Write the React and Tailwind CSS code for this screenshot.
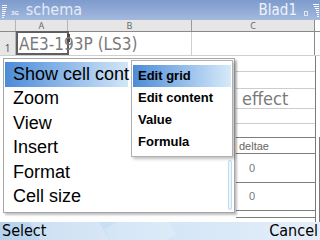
const narrow = "font-['Liberation_Sans_Narrow','DejaVu_Sans_Condensed','Liberation_Sans',sans-serif]"

function Bars({ className }) {
  return (
    <div className={`flex flex-col items-end gap-[1px] ${className}`}>
      {[6, 5, 4, 3, 3, 2, 2].map((w, i) => (
        <div key={i} className="h-[1px] bg-white" style={{ width: w }} />
      ))}
    </div>
  )
}

function StatusBar() {
  return (
    <div className="relative flex h-[20px] items-center bg-gradient-to-b from-[#7e9bcd] to-[#a3b9de]">
      <div className="ml-[2px] flex flex-col items-start gap-[1px] pt-[2px]">
        {[5, 5, 4, 4, 3, 3, 2].map((w, i) => (
          <div key={i} className="h-[1px] bg-white/90" style={{ width: w }} />
        ))}
      </div>
      <span className="ml-[4px] mt-[5px] text-[6px] font-bold leading-none text-white/80">3G</span>
      <span className={`ml-[7px] text-[16px] leading-none text-[#e4ecf8] ${narrow}`}>schema</span>
      <span className={`ml-auto text-[15px] leading-none text-[#eef3fb] ${narrow}`}>Blad1</span>
      <div className="ml-[7px] mt-[6px] h-[5px] w-[4px] border border-white/70" />
      <Bars className="ml-[5px] mr-[1px] pt-[1px]" />
    </div>
  )
}

function Sheet() {
  const lower = [
    { h: 16 },
    { h: 17 },
    { h: 20, text: "effect", big: true },
    { h: 15 },
    { h: 14, dark: true },
    { h: 16, text: "deltae", dark: true },
    { h: 29, text: "0", dark: true },
    { h: 28, text: "0", dark: true },
    { h: 7, dark: true },
  ]
  return (
    <div className="relative flex-1 overflow-hidden bg-white">
      {/* column header */}
      <div className="flex h-[12px] border-b border-[#8a8a8a] bg-[#e6e6e6] text-[9px] leading-[11px] text-[#6a6a6a]">
        <div className="w-[16px] border-r border-[#b5b5b5]" />
        <div className="w-[52px] border-r border-[#b5b5b5] text-center">A</div>
        <div className="w-[124px] border-r border-[#9a9a9a] text-center">B</div>
        <div className="w-[123px] border-r border-[#8a8a8a] text-center">C</div>
        <div className="flex-1 bg-white" />
      </div>
      {/* row 1 */}
      <div className="relative flex h-[24px] border-b border-[#cfcfcf]">
        <div className="flex w-[16px] items-end justify-center border-r border-[#b5b5b5] bg-[#e6e6e6] pb-[2px] text-[10px] leading-none text-[#555]">1</div>
        <div className="w-[52px] border-r border-[#cfcfcf]" />
        <div className="w-[124px] border-r border-[#cfcfcf]" />
        <div className="w-[123px] border-r border-[#8a8a8a]" />
        <div className="absolute left-[16px] top-[-1px] h-[24px] w-[53px] border-2 border-[#5f5f5f]" />
        <div className="absolute left-[67px] top-[2px] h-[8px] w-[3px] bg-[#4a4a4a]" />
        <span className={`absolute left-[19px] top-[4px] text-[17px] leading-none text-[#7a7a7a] ${narrow}`}>AE3-193P (LS3)</span>
      </div>
      {/* lower rows */}
      <div className="flex">
        <div className="w-[236px]" />
        <div className="w-[80px] border-r border-[#7a7a7a]">
          {lower.map((r, i) => (
            <div
              key={i}
              className={`flex items-center border-b ${r.dark ? "border-[#7d7d7d]" : "border-[#cdcdcd]"}`}
              style={{ height: r.h }}
            >
              {r.text && (
                <span
                  className={
                    r.big
                      ? `ml-[6px] text-[18px] leading-none text-[#7a7a7a] ${narrow}`
                      : r.text === "0"
                      ? "ml-[13px] text-[11px] leading-none text-[#777] font-['Liberation_Sans',sans-serif]"
                      : "ml-[3px] mt-[2px] text-[11px] leading-none text-[#666] font-['Liberation_Sans',sans-serif]"
                  }
                >
                  {r.text}
                </span>
              )}
            </div>
          ))}
        </div>
        <div className="mt-[81px] h-[100px] w-[4px] border-r border-[#7a7a7a]" />
      </div>
    </div>
  )
}

function Softkeys() {
  return (
    <div className={`relative flex h-[18px] items-center justify-between overflow-hidden bg-gradient-to-r from-[#b6d2ee] via-[#d3e5f6] to-[#e4eef9] px-[2px] text-[16px] leading-none text-black ${narrow}`}>
      <div className="absolute left-[40px] top-[-20px] h-[60px] w-[60px] rotate-[60deg] bg-white/25" />
      <div className="absolute left-[120px] top-[-20px] h-[60px] w-[40px] rotate-[60deg] bg-white/20" />
      <span className="relative">Select</span>
      <span className="relative">Cancel</span>
    </div>
  )
}

function Menu() {
  const main = ["Show cell cont", "Zoom", "View", "Insert", "Format", "Cell size"]
  const sub = ["Edit grid", "Edit content", "Value", "Formula"]
  return (
    <>
      <div className="absolute left-[3px] top-[58px] h-[155px] w-[232px] border border-[#a6a6a6] bg-white pt-[3px] shadow-[2px_2px_2px_rgba(0,0,0,0.25)]">
        {main.map((m, i) => (
          <div
            key={m}
            className={`ml-[1px] flex h-[24.5px] w-[123px] items-center whitespace-nowrap pl-[8px] text-[18px] text-black font-['Liberation_Sans',sans-serif] ${
              i === 0 ? "bg-gradient-to-r from-[#4c8cd7] to-[#d2e6f8]" : ""
            }`}
          >
            {m}
          </div>
        ))}
        <div className="absolute left-[224px] top-[101px] h-[50px] w-[4px] rounded-[2px] border border-[#bcdcf1] bg-[#eef7fc]" />
      </div>
      <div className="absolute left-[131px] top-[60px] h-[97px] w-[102px] border border-[#b0b0b0] bg-white pt-[4px] shadow-[2px_2px_3px_rgba(0,0,0,0.25)]">
        {sub.map((s, i) => (
          <div
            key={s}
            className={`mx-[1px] flex h-[22px] items-center pl-[5px] text-[13px] font-bold text-black font-['Liberation_Sans',sans-serif] ${
              i === 0 ? "bg-gradient-to-r from-[#4c8cd7] to-[#d6eaf9]" : ""
            }`}
          >
            {s}
          </div>
        ))}
      </div>
    </>
  )
}

export default function App() {
  return (
    <div className="relative flex h-[240px] w-[320px] flex-col overflow-hidden bg-white">
      <StatusBar />
      <Sheet />
      <Softkeys />
      <Menu />
    </div>
  )
}
